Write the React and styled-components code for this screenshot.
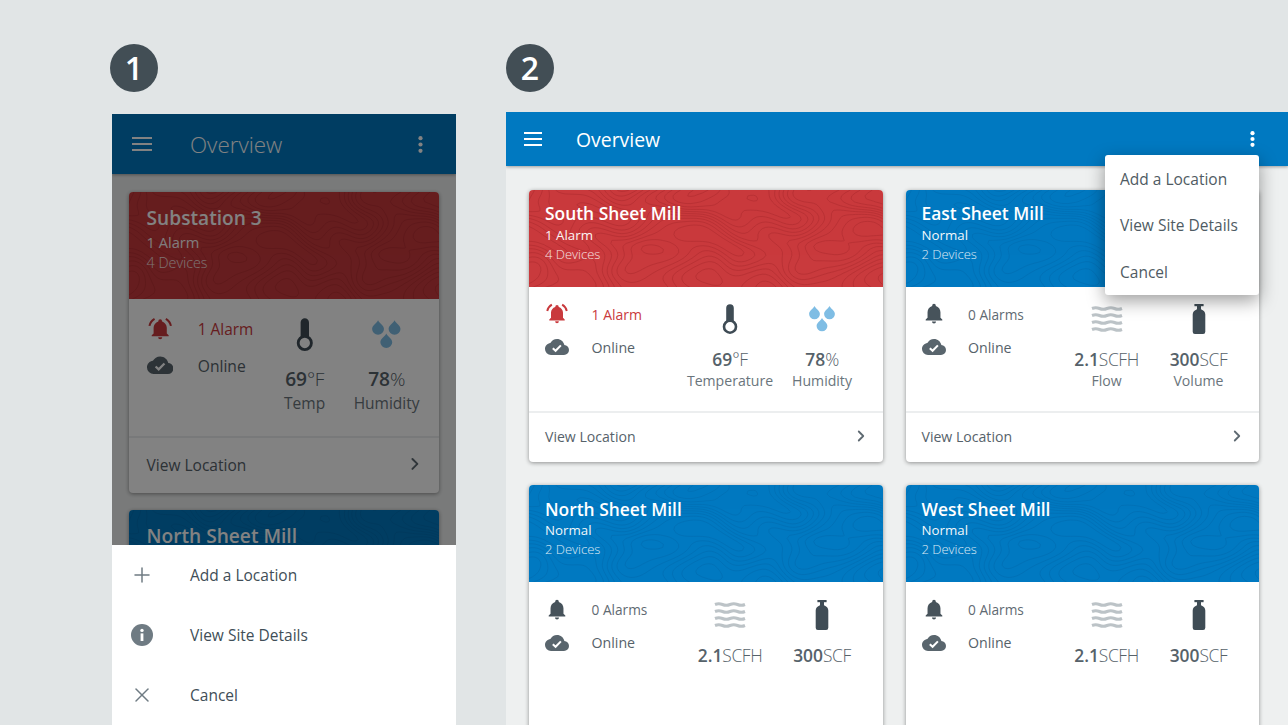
import React from 'react';
import styled, { createGlobalStyle } from 'styled-components';
import { ChevronRight, Plus, X } from 'lucide-react';

const Global = createGlobalStyle`
  html, body { margin: 0; padding: 0; background: #e1e5e6; }
  body { font-family: "Open Sans", "Liberation Sans", sans-serif; color: #4a5760; }
  * { box-sizing: border-box; }
`;

/* contour-line texture computed once with marching squares */
function field(x, y) {
  const wx = x + Math.sin(y * 0.06 + 0.8) * 22 + Math.sin(y * 0.17) * 5;
  const wy = y + Math.sin(x * 0.035 + 1.9) * 11 + Math.sin(x * 0.11 + 0.5) * 2.5;
  return (
    Math.sin(wy * 0.075 + 0.6) * 1.1 +
    Math.sin(wx * 0.03 + 1.3) * 0.9 +
    Math.sin(wx * 0.07 - wy * 0.06 + 2.1) * 0.5 +
    Math.sin(wx * 0.012 + wy * 0.025) * 0.8
  );
}
function buildTopo(w, h, step, gap) {
  let d = '';
  const lerp = (a, b, l) => (l - a) / (b - a);
  const fmt = (n) => n.toFixed(1);
  for (let l = -3.4; l <= 3.4; l += gap) {
    for (let y = 0; y < h; y += step) {
      for (let x = 0; x < w; x += step) {
        const a = field(x, y), b = field(x + step, y), c = field(x + step, y + step), e = field(x, y + step);
        const pts = [];
        if (a < l !== b < l) pts.push([x + lerp(a, b, l) * step, y]);
        if (b < l !== c < l) pts.push([x + step, y + lerp(b, c, l) * step]);
        if (e < l !== c < l) pts.push([x + lerp(e, c, l) * step, y + step]);
        if (a < l !== e < l) pts.push([x, y + lerp(a, e, l) * step]);
        if (pts.length >= 2) d += `M${fmt(pts[0][0])} ${fmt(pts[0][1])}L${fmt(pts[1][0])} ${fmt(pts[1][1])}`;
        if (pts.length === 4) d += `M${fmt(pts[2][0])} ${fmt(pts[2][1])}L${fmt(pts[3][0])} ${fmt(pts[3][1])}`;
      }
    }
  }
  return d;
}
const TOPO = buildTopo(354, 98, 3, 0.42);

const Page = styled.div`
  width: 1288px;
  height: 725px;
  overflow: hidden;
  display: grid;
  grid-template-columns: 344px 782px;
  column-gap: 50px;
  padding: 44px 0 0 112px;
  background: #e1e5e6;
`;
const Column = styled.div`
  display: flex;
  flex-direction: column;
  align-items: flex-start;
  gap: ${(p) => p.$gap}px;
  min-height: 0;
  height: 681px;
`;
const Badge = styled.div`
  width: 48px;
  height: 48px;
  flex: none;
  margin-left: ${(p) => p.$shift || 0}px;
  border-radius: 50%;
  background: #424e55;
  color: #fff;
  font-size: 32px;
  font-weight: 600;
  line-height: 48px;
  text-align: center;
`;

const Phone = styled.div`
  width: 344px;
  flex: 1;
  min-height: 0;
  display: flex;
  flex-direction: column;
`;
const Screen = styled.div`
  position: relative;
  flex: 1;
  min-height: 0;
  overflow: hidden;
  background: #eef0f0;
  display: flex;
  flex-direction: column;
  &::after {
    content: '';
    position: absolute;
    z-index: 2;
    inset: 0;
    background: rgba(0, 0, 0, 0.49);
  }
`;
const AppBar = styled.div`
  position: relative;
  z-index: 1;
  flex: none;
  height: ${(p) => p.$h}px;
  display: flex;
  align-items: center;
  padding: 0 ${(p) => p.$right}px 0 ${(p) => p.$left}px;
  background: #0079c1;
  color: #fff;
  box-shadow: 0 1px 3px rgba(0, 0, 0, 0.35);
`;
const AppTitle = styled.div`
  flex: 1;
  margin-left: ${(p) => p.$gap}px;
  padding-top: 2px;
  font-size: ${(p) => p.$size}px;
  font-weight: ${(p) => p.$weight};
  line-height: 1;
`;
const PhoneCards = styled.div`
  display: flex;
  flex-direction: column;
  gap: 17px;
  padding: 18px 17px;
`;
const Sheet = styled.div`
  flex: none;
  height: 180px;
  background: #fff;
`;
const SheetItem = styled.div`
  height: 60px;
  display: flex;
  align-items: center;
  padding-bottom: 1px;
  color: #414e57;
  font-size: 15.5px;
  font-weight: 500;
`;
const SheetIcon = styled.div`
  width: 78px;
  padding-left: 19px;
  display: flex;
  color: #6f7b83;
`;

const Panel = styled.div`
  position: relative;
  width: 782px;
  flex: 1;
  margin-top: 0;
  min-height: 0;
  background: #eef0f0;
  overflow: hidden;
  display: flex;
  flex-direction: column;
`;
const CardGrid = styled.div`
  display: grid;
  grid-template-columns: 353.5px 353.5px;
  gap: 23px;
  padding: 23.5px 0 0 23px;
`;
const Card = styled.div`
  --s: ${(p) => p.$s};
  width: ${(p) => p.$w};
  height: ${(p) => p.$h}px;
  flex: none;
  display: flex;
  flex-direction: column;
  background: #fff;
  border-radius: 4px;
  overflow: hidden;
  box-shadow: 0 1px 4px rgba(0, 0, 0, 0.4);
`;
const CardHead = styled.div`
  position: relative;
  flex: none;
  height: calc(97px * var(--s));
  padding: calc(11.5px * var(--s)) 0 0 calc(16px * var(--s));
  background: ${(p) => (p.$alarm ? '#c93a3d' : '#0079c1')};
  color: #fff;
`;
const Texture = styled.svg`
  position: absolute;
  inset: 0;
  width: 100%;
  height: 100%;
  fill: none;
  stroke: ${(p) => (p.$alarm ? '#8f1b1f' : '#00508a')};
  stroke-width: 0.6;
  opacity: ${(p) => (p.$alarm ? 0.45 : 0.3)};
`;
const HeadText = styled.div`
  position: relative;
`;
const CardTitle = styled.div`
  font-size: calc(17.4px * var(--s));
  font-weight: 600;
  line-height: calc(24px * var(--s));
  margin-bottom: calc(0.5px * var(--s));
`;
const CardSub = styled.div`
  font-size: calc(${(p) => (p.$light ? 13 : 13.3)}px * var(--s));
  line-height: calc(19px * var(--s));
  font-weight: ${(p) => (p.$light ? 300 : 400)};
  opacity: ${(p) => (p.$light ? 0.85 : 0.95)};
`;
const CardBody = styled.div`
  flex: 1;
  min-height: 0;
  display: grid;
  grid-template-columns: ${(p) => p.$cols};
  align-items: start;
  padding: calc(11.4px * var(--s)) 0 0 calc(16px * var(--s));
`;
const StatusList = styled.div`
  display: flex;
  flex-direction: column;
`;
const StatusRow = styled.div`
  height: calc(33px * var(--s));
  display: flex;
  align-items: center;
  font-size: calc(${(p) => p.$size}px * var(--s));
  font-weight: ${(p) => p.$weight || 400};
  color: ${(p) => p.$color || '#5f6a72'};
`;
const StatusIcon = styled.div`
  width: calc(46.5px * var(--s));
  flex: none;
  display: flex;
  svg {
    display: block;
    width: calc(24px * var(--s));
    height: calc(24px * var(--s));
  }
`;
const Metric = styled.div`
  display: flex;
  flex-direction: column;
  align-items: center;
  padding-top: calc(6.6px * var(--s));
  white-space: nowrap;
`;
const MetricIcon = styled.div`
  height: calc(30px * var(--s));
  display: flex;
  align-items: center;
  justify-content: center;
  svg {
    display: block;
    height: 100%;
    width: auto;
  }
`;
const MetricValue = styled.div`
  margin-top: calc(12.6px * var(--s) + (var(--s) - 1) * 8px);
  font-size: calc(17.4px * var(--s));
  line-height: calc(24px * var(--s));
  font-weight: 600;
  color: #56626a;
`;
const Unit = styled.span`
  font-weight: 300;
  letter-spacing: -0.4px;
`;
const MetricLabel = styled.div`
  margin-top: calc((var(--s) - 1) * 8px);
  font-size: calc(14.1px * var(--s));
  line-height: calc(19px * var(--s));
  color: #6a757c;
`;
const CardFoot = styled.div`
  flex: none;
  height: calc(51.5px * var(--s));
  border-top: 2px solid #eceeef;
  display: flex;
  align-items: center;
  justify-content: space-between;
  padding: 0 calc(13px * var(--s)) 1px calc(16px * var(--s));
  font-size: calc(14.1px * var(--s));
  font-weight: 500;
  color: #56626a;
  svg {
    width: calc(18px * var(--s));
    height: calc(18px * var(--s));
    margin-top: -2px;
    color: #5f6a72;
  }
`;

const Menu = styled.div`
  position: absolute;
  z-index: 3;
  top: 43px;
  right: 29px;
  width: 154px;
  height: 140px;
  background: #fff;
  border-radius: 3px;
  box-shadow: 0 6px 18px rgba(0, 0, 0, 0.38);
`;
const MenuItem = styled.div`
  height: 46.67px;
  padding: 1px 0 0 15px;
  display: flex;
  align-items: center;
  font-size: 15.5px;
  color: #4f5b63;
`;

const Burger = ({ w, h }) => (
  <svg width={w} height={h} viewBox={`0 0 ${w} ${h}`} fill="currentColor">
    <rect y="0" width={w} height="2" />
    <rect y={(h - 2) / 2} width={w} height="2" />
    <rect y={h - 2} width={w} height="2" />
  </svg>
);
const Dots = ({ h }) => (
  <svg width="5" height={h} viewBox={`0 0 5 ${h}`} fill="currentColor">
    <circle cx="2.5" cy="2.2" r="2.1" />
    <circle cx="2.5" cy={h / 2} r="2.1" />
    <circle cx="2.5" cy={h - 2.2} r="2.1" />
  </svg>
);
const BellPath =
  'M21,19V20H3V19L5,17V11C5,7.9 7.03,5.17 10,4.29V4A2,2 0 0,1 12,2A2,2 0 0,1 14,4V4.29C16.97,5.17 19,7.9 19,11V17L21,19M14.2,21A2.2,2.2 0 0,1 9.8,21Z';
const Bell = () => (
  <svg viewBox="-1 0 26 26" fill="#47535b">
    <path d={BellPath} />
  </svg>
);
const AlarmBell = () => (
  <svg viewBox="-2 -1.5 28 28" fill="#c93a3d">
    <path d={BellPath} />
    <path d="M6 1.6C3 3.4 1.2 6 .6 9M18 1.6C21 3.4 22.8 6 23.4 9" fill="none" stroke="#c93a3d" strokeWidth="2.2" />
  </svg>
);
const Cloud = () => (
  <svg viewBox="0 0 24 24">
    <path fill="#59656d" d="M19.35,10.03C18.67,6.59 15.64,4 12,4C9.11,4 6.6,5.64 5.35,8.03C2.34,8.36 0,10.9 0,14A6,6 0 0,0 6,20H19A5,5 0 0,0 24,15C24,12.36 21.95,10.22 19.35,10.03Z" />
    <path d="M7.8 13.2L10.6 15.8L15.9 10.4" fill="none" stroke="#fff" strokeWidth="2" />
  </svg>
);
const Thermometer = () => (
  <svg viewBox="0 0 16 30">
    <path fill="#3f4c55" d="M4.2 4a3.8 3.8 0 0 1 7.6 0V19H4.2z" />
    <circle cx="8" cy="22.7" r="6" fill="#fff" stroke="#3f4c55" strokeWidth="2.6" />
  </svg>
);
const dropPath = (cx, t) =>
  `M${cx} ${t}C${cx + 1.4} ${t + 3} ${cx + 5.4} ${t + 4.6} ${cx + 5.4} ${t + 8}a5.4 5.2 0 0 1-10.8 0C${cx - 5.4} ${t + 4.6} ${cx - 1.4} ${t + 3} ${cx} ${t}z`;
const Drops = () => (
  <svg viewBox="0 0 26 30" fill="#7fbde4">
    <path d={dropPath(5.5, 2)} />
    <path d={dropPath(20.5, 2)} />
    <path d={dropPath(13, 14)} />
  </svg>
);
const Waves = () => (
  <svg viewBox="0 0 32 30" fill="none" stroke="#bcc3c7" strokeWidth="3">
    {[4.5, 11.5, 18.5, 25.5].map((y) => (
      <path key={y} d={`M1 ${y}q3.75 -1.5 7.5 0t7.5 0t7.5 0t7.5 0`} />
    ))}
  </svg>
);
const Bottle = () => (
  <svg viewBox="0 0 14 30" fill="#3f4c55">
    <rect x="2.4" y="0" width="9.2" height="2.2" />
    <path d="M5 2h4v3.2c2.6 1 4.3 2.8 4.3 5.4V27.8a2.2 2.2 0 0 1-2.2 2.2H2.9a2.2 2.2 0 0 1-2.2-2.2V10.6C.7 8 2.4 6.2 5 5.2z" />
  </svg>
);
const InfoIcon = () => (
  <svg width="22" height="22" viewBox="0 0 22 22">
    <circle cx="11" cy="11" r="11" fill="#6f7b83" />
    <rect x="9.6" y="9.4" width="2.8" height="7.6" fill="#fff" />
    <circle cx="11" cy="6.4" r="1.7" fill="#fff" />
  </svg>
);

function SiteCard({ s, w, h, cols, name, alarm, sub, devices, metrics, footer }) {
  return (
    <Card $s={s} $w={w} $h={h}>
      <CardHead $alarm={alarm}>
        <Texture $alarm={alarm} viewBox="0 0 354 98" preserveAspectRatio="none">
          <path d={TOPO} />
        </Texture>
        <HeadText>
          <CardTitle>{name}</CardTitle>
          {sub && <CardSub>{sub}</CardSub>}
          {devices && <CardSub $light>{devices}</CardSub>}
        </HeadText>
      </CardHead>
      {metrics && (
        <CardBody $cols={cols}>
          <StatusList>
            <StatusRow $size={alarm ? 14 : 13.7} $color={alarm ? '#c93a3d' : undefined} $weight={alarm ? 500 : 400}>
              <StatusIcon>{alarm ? <AlarmBell /> : <Bell />}</StatusIcon>
              {alarm ? '1 Alarm' : '0 Alarms'}
            </StatusRow>
            <StatusRow $size={14.2} $weight={500} $color="#56626a">
              <StatusIcon>
                <Cloud />
              </StatusIcon>
              Online
            </StatusRow>
          </StatusList>
          {metrics.map((m) => (
            <Metric key={m.unit}>
              <MetricIcon>{m.icon}</MetricIcon>
              <MetricValue>
                {m.value}
                <Unit>{m.unit}</Unit>
              </MetricValue>
              {m.label && <MetricLabel>{m.label}</MetricLabel>}
            </Metric>
          ))}
        </CardBody>
      )}
      {footer && (
        <CardFoot>
          View Location
          <ChevronRight strokeWidth={2.4} />
        </CardFoot>
      )}
    </Card>
  );
}

const climate = (temp) => [
  { icon: <Thermometer />, value: '69', unit: '°F', label: temp },
  { icon: <Drops />, value: '78', unit: '%', label: 'Humidity' },
];
const gas = (labels) => [
  { icon: <Waves />, value: '2.1', unit: 'SCFH', label: labels ? 'Flow' : null },
  { icon: <Bottle />, value: '300', unit: 'SCF', label: labels ? 'Volume' : null },
];

const DESK = { s: 1, w: '353.5px', h: 272.5, cols: '139px 92px 92px' };
const MOBILE = { s: 1.1, w: '310px', h: 301, cols: '117px 82px 82px' };

export default function App() {
  return (
    <Page>
      <Global />
      <Column $gap={22}>
        <Badge $shift={-2}>1</Badge>
        <Phone>
          <Screen>
            <AppBar $h={60} $left={20} $right={33}>
              <Burger w={20} h={14} />
              <AppTitle $gap={38} $size={22.4} $weight={300}>
                Overview
              </AppTitle>
              <Dots h={17} />
            </AppBar>
            <PhoneCards>
              <SiteCard {...MOBILE} name="Substation 3" alarm sub="1 Alarm" devices="4 Devices" metrics={climate('Temp')} footer />
              <SiteCard {...MOBILE} name="North Sheet Mill" />
            </PhoneCards>
          </Screen>
          <Sheet>
            <SheetItem>
              <SheetIcon>
                <Plus size={24} strokeWidth={1.5} style={{ marginLeft: -1 }} />
              </SheetIcon>
              Add a Location
            </SheetItem>
            <SheetItem>
              <SheetIcon>
                <InfoIcon />
              </SheetIcon>
              View Site Details
            </SheetItem>
            <SheetItem>
              <SheetIcon>
                <X size={24} strokeWidth={1.5} style={{ marginLeft: -1 }} />
              </SheetIcon>
              Cancel
            </SheetItem>
          </Sheet>
        </Phone>
      </Column>
      <Column $gap={20}>
        <Badge>2</Badge>
        <Panel>
          <AppBar $h={54} $left={18} $right={33}>
            <Burger w={18} h={14} />
            <AppTitle $gap={34} $size={19.4} $weight={400}>
              Overview
            </AppTitle>
            <Dots h={16} />
          </AppBar>
          <CardGrid>
            <SiteCard {...DESK} name="South Sheet Mill" alarm sub="1 Alarm" devices="4 Devices" metrics={climate('Temperature')} footer />
            <SiteCard {...DESK} name="East Sheet Mill" sub="Normal" devices="2 Devices" metrics={gas(true)} footer />
            <SiteCard {...DESK} name="North Sheet Mill" sub="Normal" devices="2 Devices" metrics={gas(false)} />
            <SiteCard {...DESK} name="West Sheet Mill" sub="Normal" devices="2 Devices" metrics={gas(false)} />
          </CardGrid>
          <Menu>
            <MenuItem>Add a Location</MenuItem>
            <MenuItem>View Site Details</MenuItem>
            <MenuItem>Cancel</MenuItem>
          </Menu>
        </Panel>
      </Column>
    </Page>
  );
}
